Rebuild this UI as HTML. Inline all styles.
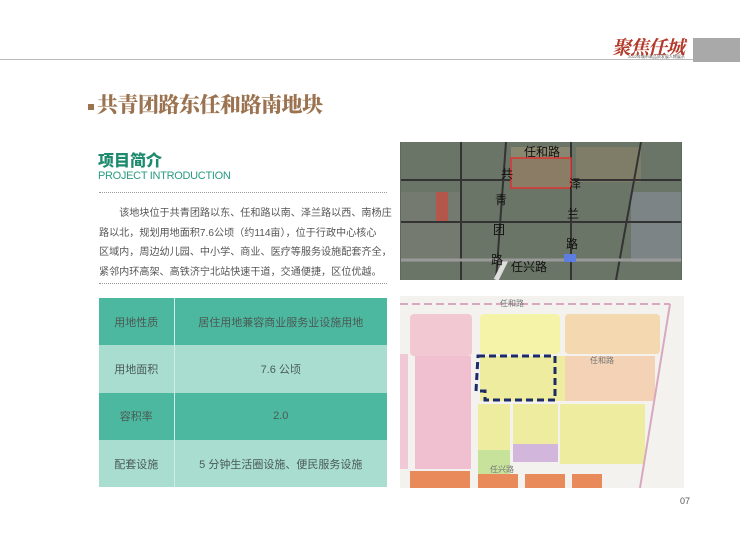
<!DOCTYPE html>
<html><head><meta charset="utf-8"><style>
*{margin:0;padding:0;box-sizing:border-box}
body{width:740px;height:545px;background:#fff;position:relative;overflow:hidden;font-family:"Liberation Sans","Noto Sans CJK SC",sans-serif}
.a{position:absolute}
.hl{left:0;top:59px;width:693px;height:1px;background:#bbb}
.gb{left:693px;top:38px;width:47px;height:24px;background:#a9a9a9}
.logo{left:612px;top:33px;font-family:"Noto Serif CJK SC",serif;font-size:19px;color:#b33a2a;font-weight:bold;letter-spacing:-1px;font-style:italic}
.logo2{left:628px;top:54px;font-size:4px;color:#555}
.title{left:88px;top:89px;font-family:"Noto Serif CJK SC",serif;font-weight:900;font-size:21px;color:#9b7350;letter-spacing:-0.5px}
.title b{display:inline-block;width:6px;height:6px;background:#9b7350;margin-right:3px;vertical-align:2px}
.h1{left:98px;top:147px;font-size:16px;font-weight:900;color:#1e8a6e}
.h2{left:98px;top:170px;font-size:11px;color:#2a9b82;letter-spacing:-0.3px}
.dl{left:99px;width:288px;border-top:1px dotted #999}
.p{left:99px;top:204px;width:296px;font-size:10.1px;line-height:19.7px;color:#555;white-space:nowrap}
table{position:absolute;left:99px;top:298px;width:288px;border-collapse:collapse;font-size:11px;color:#4a5a55}
td{height:47.3px;text-align:center}
td:first-child{width:75px;border-right:1px solid #cfeee5}
tr.d{background:#4db8a0}
tr.l{background:#a8ddd0}
.m1{left:400px;top:142px;width:282px;height:138px;background:#5d6a5e;overflow:hidden}
.m2{left:400px;top:296px;width:284px;height:192px;background:#f2f1ec;overflow:hidden}
.pg{left:680px;top:496px;font-size:9px;color:#555}
</style></head><body>
<div class="a hl"></div><div class="a gb"></div>
<div class="a logo">聚焦任城</div><div class="a logo2">2022年城市高品质发展人物展示</div>
<div class="a title"><b></b>共青团路东任和路南地块</div>
<div class="a h1">项目简介</div>
<div class="a h2">PROJECT INTRODUCTION</div>
<div class="a dl" style="top:192px"></div>
<div class="a p">&emsp;&emsp;该地块位于共青团路以东、任和路以南、泽兰路以西、南杨庄<br>路以北，规划用地面积7.6公顷（约114亩），位于行政中心核心<br>区域内，周边幼儿园、中小学、商业、医疗等服务设施配套齐全，<br>紧邻内环高架、高铁济宁北站快速干道，交通便捷，区位优越。</div>
<div class="a dl" style="top:283px"></div>
<table>
<tr class="d"><td>用地性质</td><td>居住用地兼容商业服务业设施用地</td></tr>
<tr class="l"><td>用地面积</td><td>7.6 公顷</td></tr>
<tr class="d"><td>容积率</td><td>2.0</td></tr>
<tr class="l"><td>配套设施</td><td>5 分钟生活圈设施、便民服务设施</td></tr>
</table>
<div class="a m1">
<svg width="282" height="138" viewBox="0 0 280 138">
<rect width="280" height="138" fill="#6b7567"/>
<rect x="110" y="5" width="60" height="35" fill="#8a8770"/>
<rect x="175" y="5" width="65" height="35" fill="#7f7d68"/>
<rect x="230" y="50" width="50" height="70" fill="#7d8485"/>
<rect x="0" y="50" width="60" height="70" fill="#747a70"/>
<rect x="35" y="50" width="12" height="30" fill="#b4564a"/>
<g stroke="#333" stroke-width="2" fill="none">
<path d="M0 38 H280 M0 80 H280 M0 118 H280 M60 0 V138 M105 0 L95 138 M170 0 V138 M240 0 L215 138"/>
</g>
<path d="M105 118 L95 138" stroke="#ddd" stroke-width="5"/>
<path d="M0 118 H280" stroke="#999" stroke-width="3"/>
<rect x="110" y="16" width="60" height="30" fill="#8b7c66" stroke="#d33" stroke-width="1.5"/>
<rect x="163" y="112" width="12" height="8" fill="#5b7ee0"/>
<g font-size="12" fill="#111" font-family="Noto Sans CJK SC,sans-serif">
<text x="123" y="14">任和路</text><text x="100" y="36">共</text><text x="94" y="62">青</text><text x="92" y="92">团</text><text x="90" y="122">路</text>
<text x="168" y="46">泽</text><text x="166" y="76">兰</text><text x="165" y="106">路</text><text x="110" y="129">任兴路</text></g>
</svg></div>
<div class="a m2">
<svg width="284" height="192" viewBox="0 0 284 192">
<rect width="284" height="192" fill="#f3f2ee"/>
<rect x="10" y="18" width="62" height="42" rx="4" fill="#f2c8d2"/>
<rect x="0" y="58" width="8" height="115" fill="#efc9d6"/>
<rect x="15" y="60" width="56" height="113" fill="#f0c0d0"/>
<rect x="80" y="18" width="80" height="40" rx="4" fill="#f4f3a8"/>
<rect x="165" y="18" width="95" height="40" rx="4" fill="#f3d8b0"/>
<rect x="80" y="60" width="85" height="45" fill="#eeed9f"/>
<rect x="165" y="60" width="90" height="45" fill="#f3d2b5"/>
<rect x="78" y="108" width="32" height="46" fill="#eeed9f"/>
<rect x="78" y="154" width="32" height="28" fill="#c7e29a"/>
<rect x="113" y="108" width="45" height="40" fill="#eeed9f"/>
<rect x="113" y="148" width="45" height="18" fill="#d2b6dc"/>
<rect x="160" y="108" width="85" height="60" fill="#eeed9f"/>
<rect x="10" y="175" width="60" height="17" fill="#e98a5a"/>
<rect x="78" y="178" width="40" height="14" fill="#e98a5a"/>
<rect x="125" y="178" width="40" height="14" fill="#e98a5a"/>
<rect x="172" y="178" width="30" height="14" fill="#e98a5a"/>
<path d="M0 8 H270" stroke="#d8a8c0" stroke-width="2" stroke-dasharray="8 4"/>
<path d="M270 8 L240 192" stroke="#d8a8c0" stroke-width="2"/>
<path d="M78 60 H155 V104 H85 V95 H76 Z" fill="none" stroke="#1c2a66" stroke-width="3" stroke-dasharray="7 4"/>
<g font-size="8" fill="#777"><text x="100" y="10">任和路</text><text x="190" y="67">任和路</text><text x="90" y="176">任兴路</text></g>
</svg></div>
<div class="a pg">07</div>
</body></html>
